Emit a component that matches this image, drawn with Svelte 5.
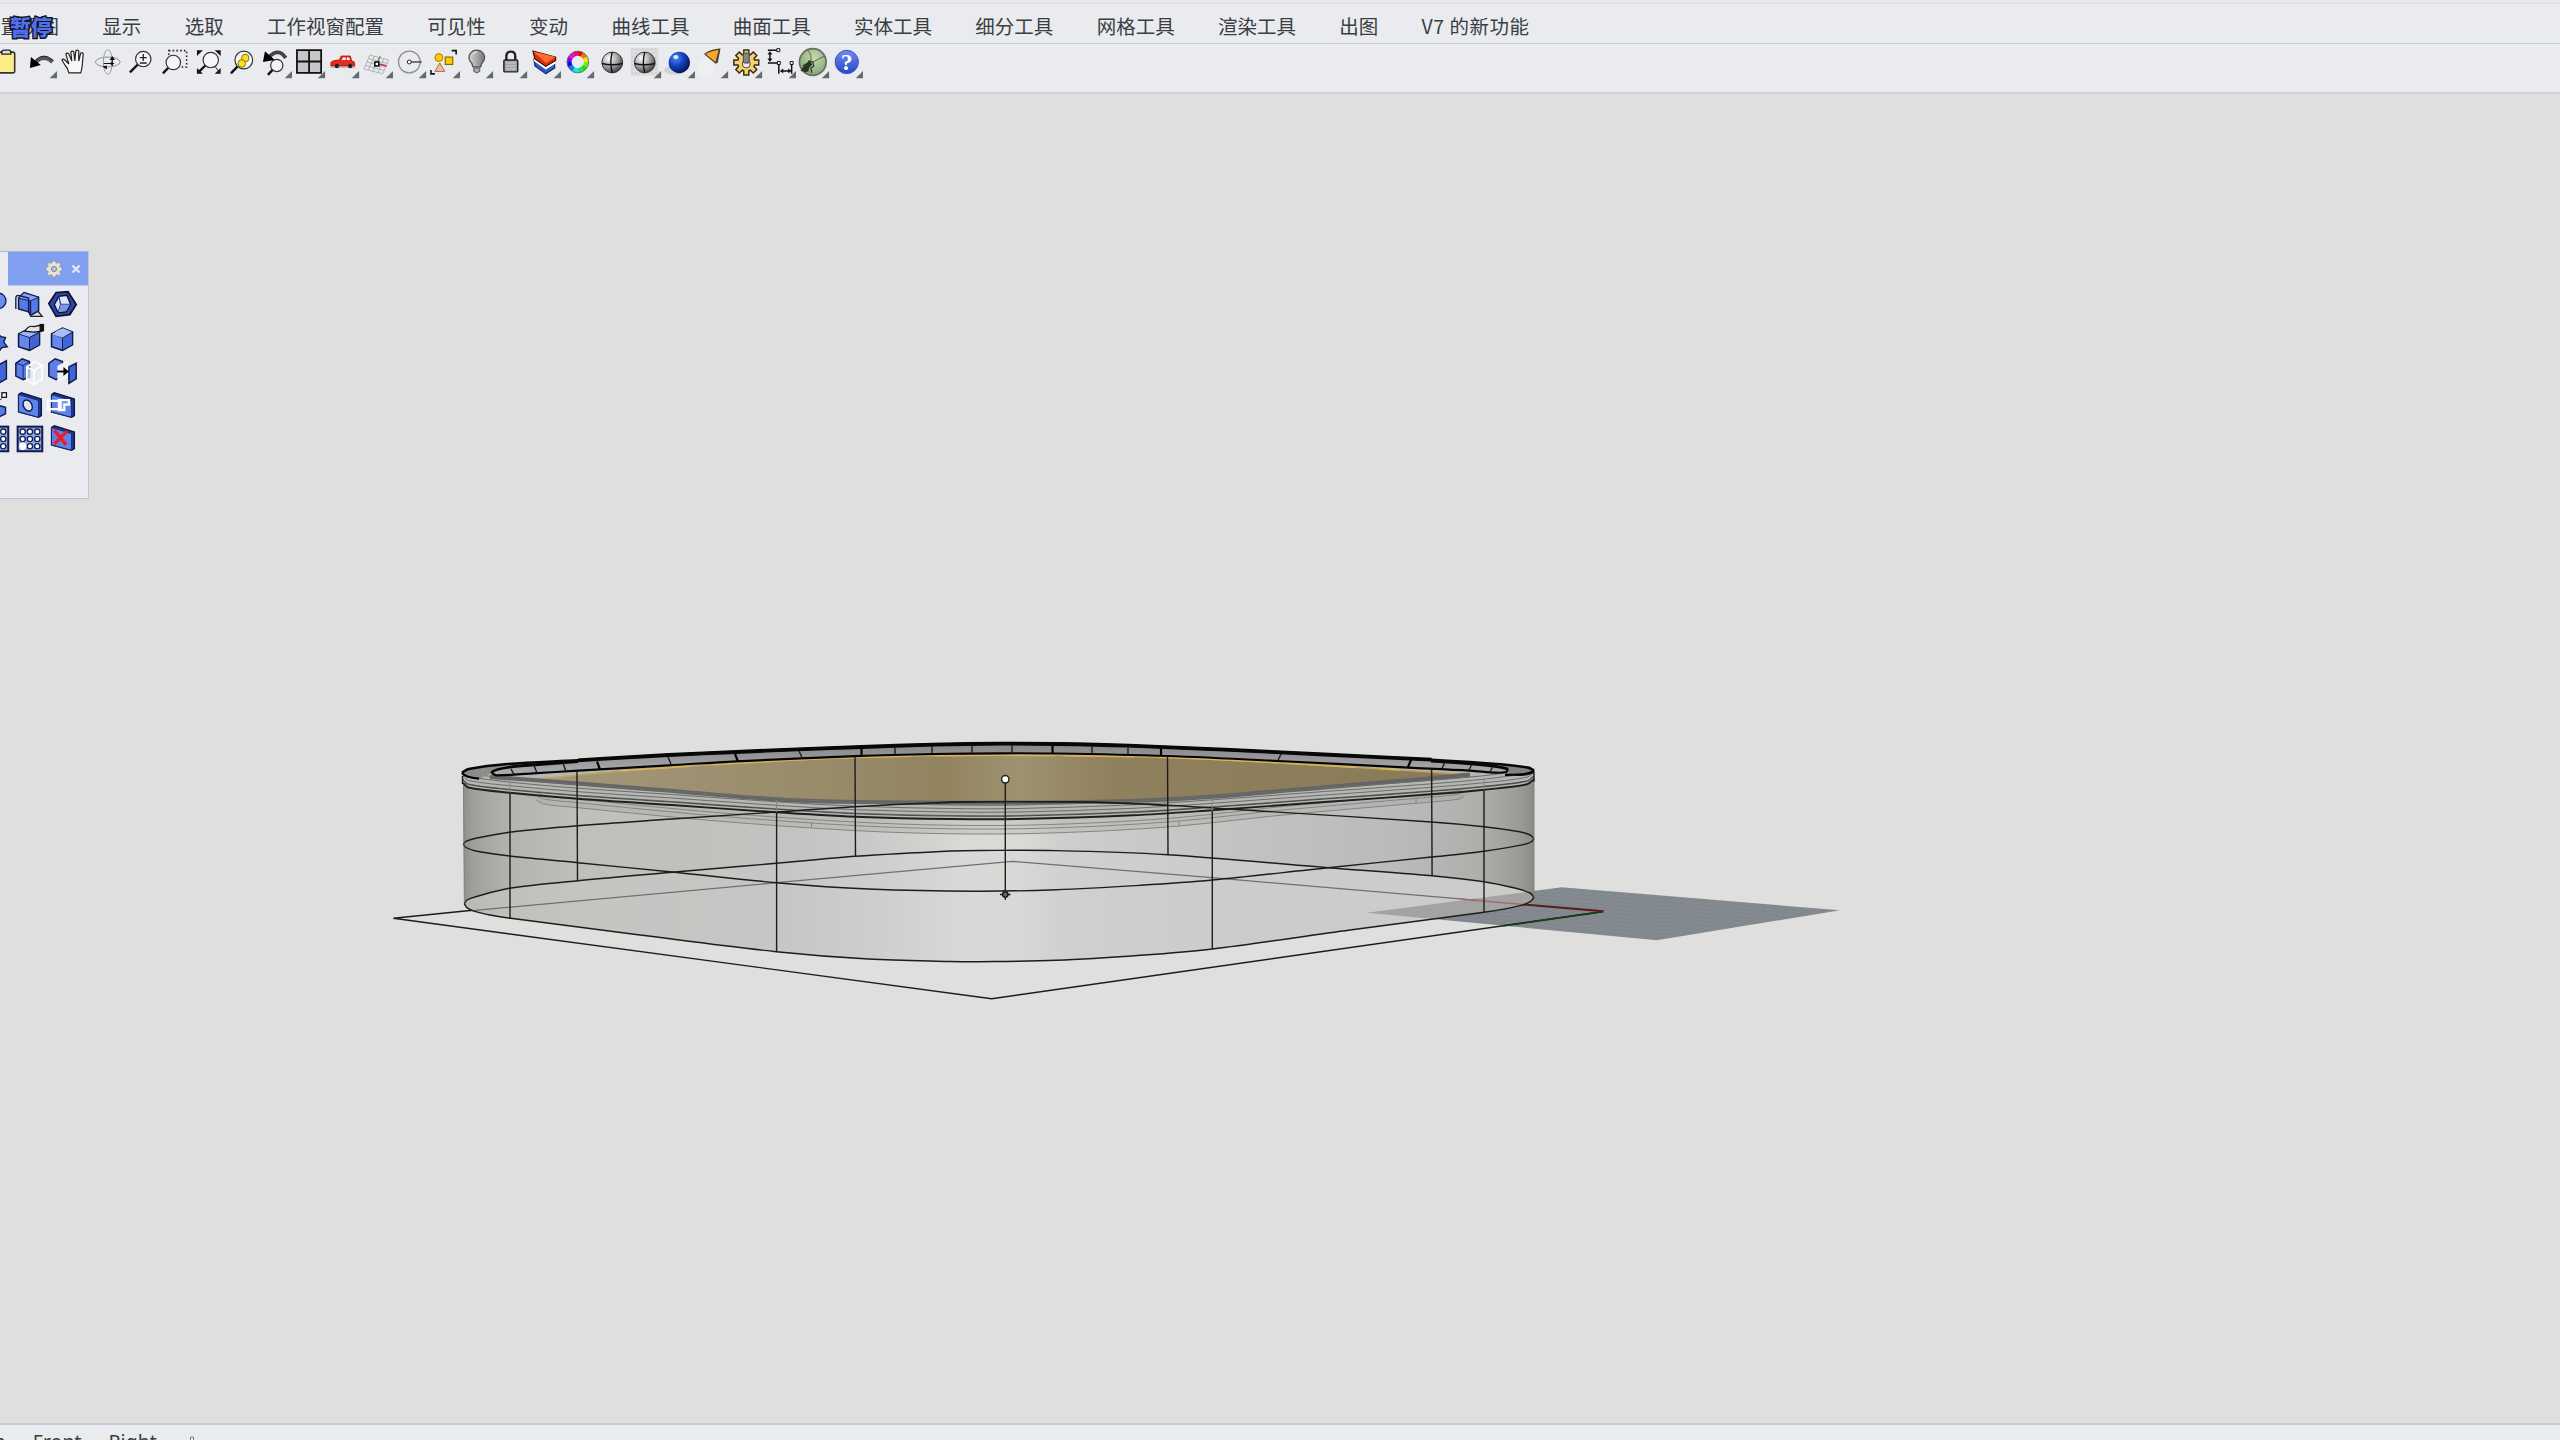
<script>
  const menus = ['设置视图', '显示', '选取', '工作视窗配置', '可见性', '变动', '曲线工具', '曲面工具', '实体工具', '细分工具', '网格工具', '渲染工具', '出图', 'V7 的新功能'];

  const lens = (cx, cy, r, hx, hy) => {
    const a = Math.atan2(hy - cy, hx - cx);
    const sx = cx + r * Math.cos(a), sy = cy + r * Math.sin(a);
    return `<path d="M${sx} ${sy}L${hx} ${hy}" stroke="#111" stroke-width="2.4"/><circle cx="${cx}" cy="${cy}" r="${r}" fill="#f4f5f7" stroke="#333" stroke-width="1.2"/>`;
  };

  const gear = (cx, cy, ro, ri, n) => {
    let d = '';
    for (let i = 0; i < n; i++) {
      const a = (i / n) * Math.PI * 2, s = Math.PI / n;
      [[-0.75, ri], [-0.5, ro], [0.5, ro], [0.75, ri]].forEach(([k, r], j) => {
        const t = a + k * s;
        d += `${i || j ? 'L' : 'M'}${(cx + r * Math.cos(t)).toFixed(1)} ${(cy + r * Math.sin(t)).toFixed(1)}`;
      });
    }
    return d + 'Z';
  };

  // Each tool is drawn in a 34 x 34 box; `more` adds the flyout corner mark.
  const tools = [
    { name: 'paste', art: '<rect x="6" y="7" width="19" height="21" rx="2" fill="#fbee88" stroke="#333" stroke-width="1.6"/><path d="M12 9V7q0-2 2-2h5q2 0 2 2v2z" fill="#ddd" stroke="#222" stroke-width="1.4"/>' },
    { name: 'undo', more: 1, art: '<path d="M12 17Q20 9 29 17" fill="none" stroke="#55595e" stroke-width="4"/><path d="M12 15Q20 7 29 15" fill="none" stroke="#222" stroke-width="1"/><path d="M6 23L7 12L17 20Z" fill="#000"/>' },
    { name: 'pan', art: '<path d="M12 28q-1-5-4-8l-3-5q1-2 3 0l4 4-3-10q1-2 3 0l3 7-1-9q1.500-2 3 0l1 9 1-10q1.500-2 3 0v10l2-8q2-1 2.500 1l-1 12q-.5 4-1.500 7z" fill="#f7f7f7" stroke="#222" stroke-width="1.2"/>' },
    { name: 'rotate', art: '<ellipse cx="17" cy="17" rx="12.500" ry="5" fill="none" stroke="#8e9196"/><ellipse cx="17" cy="17" rx="4.500" ry="12.500" fill="none" stroke="#9a9da2"/><path d="M13 18.500h10M21.500 13v8" stroke="#111" stroke-width="1.200"/><path d="M16 20.500v4l-4.500-3zM18.800 15h5.400l-2.700-4zM20 20v-3l4 1.500z" fill="#111"/>' },
    { name: 'zoom', art: lens(19.500, 14, 7.8, 6, 27.500) + '<path d="M16 12.500h7M19.500 9v7M16 18h7" stroke="#222" stroke-width="1.300"/>' },
    { name: 'zoom-window', art: '<rect x="11" y="5.500" width="18" height="16.500" fill="none" stroke="#222" stroke-width="1.600" stroke-dasharray="1.600 2.200"/>' + lens(15.500, 17.500, 7.3, 5, 28.500) },
    { name: 'zoom-extents', art: '<path d="M5 5h6l-6 6zM29 5h-6l6 6zM5 29h6l-6-6zM29 29h-6l6-6z" fill="#111"/><path d="M23 21l5 7" stroke="#333"/>' + lens(19, 15, 7.8, 7, 27) },
    { name: 'zoom-selected', art: lens(19, 15, 9, 6, 28.500) + '<circle cx="20.500" cy="13" r="3.800" fill="#ffe01b" stroke="#8a7300"/><circle cx="17" cy="18.500" r="3.800" fill="#ffe01b" stroke="#8a7300"/>' },
    { name: 'undo-view', more: 1, art: '<path d="M10 12Q20 2 27 13" fill="none" stroke="#444" stroke-width="3.800"/><path d="M4 17L6 6l10 9z" fill="#000"/>' + lens(18, 20.500, 6.2, 9, 30) },
    { name: 'viewports', more: 1, art: '<rect x="5" y="5" width="24.500" height="23" fill="#c6c7c9" stroke="#111" stroke-width="1.800"/><path d="M17.300 5v23M5 16.500h24.500" stroke="#111" stroke-width="1.800"/>' },
    { name: 'car', more: 1, art: '<path d="M4 22.500h26" stroke="#c2c2c2" stroke-width="1.500"/><path d="M5 21v-3.500q1-2 8.500-2.500l2-4h9l1.500 5q3 0 3 3v2z" fill="#e52c21" stroke="#b8180f"/><path d="M16 15l1-2.500h3V15zM21 12.500h2.500l.7 2.500H21z" fill="#eef"/><circle cx="11" cy="21" r="2.200" fill="#222"/><circle cx="24.500" cy="21" r="2.200" fill="#222"/>' },
    { name: 'cplane', more: 1, art: '<path d="M10 10l19 5-6 14-19-5zM14.500 11l-6 14M19 12.500l-6 14M24 14l-6 14M8.500 13.500l19 5M7 17l19 5M5.500 20.500l19 5" fill="none" stroke="#a9acb0" stroke-width=".9"/><path d="M18 18l2.500-7" stroke="#40a040" stroke-width="1.200"/><path d="M19 19l8 2" stroke="#c33" stroke-width="1.500"/><rect x="15" y="17" width="4" height="4" fill="#fff" stroke="#000" stroke-width="1.500"/>' },
    { name: 'circle-radius', more: 1, art: '<circle cx="16.500" cy="17" r="11" fill="none" stroke="#8d9095" stroke-width="1.300"/><path d="M17 17h12" stroke="#333" stroke-width="1.300"/><circle cx="16.500" cy="17" r="2" fill="#fff" stroke="#222"/>' },
    { name: 'select', more: 1, art: '<path d="M4 25v4h4M25 5.500h4.500v4" fill="none" stroke="#111" stroke-width="1.600"/><circle cx="12" cy="12.500" r="4" fill="#ffc800" stroke="#b37800"/><rect x="18.500" y="12" width="7.500" height="7.500" fill="#ffcc00" stroke="#946400" stroke-width="1.200"/><path d="M13 18l5 8.500H8z" fill="#f2c09a" stroke="#a46a40"/>' },
    { name: 'light', more: 1, art: '<path d="M13 22q0-3-2.500-5.500Q8 13 10 9q2.500-4 7-4t7 4q2 4-.5 7.500Q21 19 21 22z" fill="url(#steel)" stroke="#555" stroke-width="1.300"/><path d="M14 23h6v3.500q-3 3-6 0z" fill="#aaa" stroke="#555"/><path d="M13 9q2-2.500 4-2" stroke="#fff" fill="none"/>' },
    { name: 'lock', more: 1, art: '<path d="M12.500 16v-5q0-4.500 4.500-4.500t4.500 4.500v5" fill="none" stroke="#222" stroke-width="2.400"/><rect x="10" y="15" width="14" height="12" rx="1" fill="#a2a3a5" stroke="#222" stroke-width="1.500"/><path d="M12 18h10M12 21h10M12 24h10" stroke="#d3d3d3"/>' },
    { name: 'layers', more: 1, art: '<path d="M6 14l1 7 11 8 9-6v-8l-9 6z" fill="#315ac4" stroke="#142a6b" stroke-width="1.200"/><path d="M6 12v4l12 8.500 10-6V13l-10 8z" fill="#fff"/><path d="M5 6l23 6v3.500l-10 6L7 14z" fill="#d92f10" stroke="#300" stroke-width="1.100"/><path d="M5 6l23 6-10 6z" fill="#ff6a2d"/>' },
    { name: 'colors', more: 1, art: [0, 1, 2, 3, 4, 5, 6, 7, 8, 9, 10, 11].map(i => `<circle cx="17" cy="17" r="8.500" fill="none" stroke="hsl(${i * 30} 90% 48%)" stroke-width="4.600" stroke-dasharray="4.600 100" transform="rotate(${i * 30 - 90} 17 17)"/>`).join('') + '<circle cx="17" cy="17" r="11" fill="none" stroke="#555" stroke-width=".8"/>' },
    { name: 'shaded', art: '<circle cx="17.500" cy="17.500" r="10.500" fill="url(#ball)" stroke="#333"/><path d="M17.500 7q-3 10 0 21M7 18.500q10 2.500 21 0" fill="none" stroke="#111" stroke-width="1.400"/>' },
    { name: 'shaded-selected', more: 1, art: '<rect x="3" y="3" width="28" height="28" fill="#dcdddf"/><path d="M3 4h28M3 8h28M3 12h28M3 16h28M3 20h28M3 24h28M3 28h28" stroke="#c3c4c7" stroke-dasharray="2 2"/><circle cx="17" cy="17.500" r="10.500" fill="url(#ball)" stroke="#333"/><path d="M17 7q-3 10 0 21M6.500 18.500q10 2.500 21 0" fill="none" stroke="#111" stroke-width="1.400"/>' },
    { name: 'render', more: 1, art: '<ellipse cx="13" cy="25" rx="11" ry="5" fill="#d2d3d6"/><circle cx="17.500" cy="17.500" r="10.800" fill="url(#blueball)"/><ellipse cx="14" cy="12" rx="2.600" ry="2" fill="#fff" opacity=".85"/>' },
    { name: 'spotlight', more: 1, art: '<circle cx="11" cy="23" r="9" fill="#f1f1f1" opacity=".6"/><path d="M10 9q5-4 15-5l-4 14z" fill="#f5a92f" stroke="#4b3714" stroke-width="1.200"/><path d="M21 18l3.500-14 1 1-2.500 13z" fill="#444"/>' },
    { name: 'options', more: 1, art: `<path d="${gear(17.500, 17.500, 12.800, 8.8, 8)}" fill="#f3d07a" stroke="#3f2d07" stroke-width="1.500"/><circle cx="17.500" cy="19" r="4" fill="#e9ebef" stroke="#5c440e"/><rect x="14.500" y="8" width="6" height="10" rx="1" fill="#858585" stroke="#444"/>` },
    { name: 'dimension', more: 1, art: '<path d="M5 5h11M5 18h11v11M29 18v11" fill="none" stroke="#111" stroke-width="1.500"/><path d="M7 8v7M19 26h8" stroke="#111" stroke-width="1.500"/><path d="M7 6l2.500 3.500h-5zM7 17l2.500-3.500h-5zM17 26l3.500-2.500v5zM29 26l-3.500-2.500v5z" fill="#111"/><path d="M14 3.500h3v3h-3zM14.500 16.500h3v3h-3zM27.500 16.500h3v3h-3z" fill="#fff" stroke="#111"/>' },
    { name: 'grasshopper', more: 1, art: '<circle cx="17" cy="17" r="13.500" fill="url(#leaf)" stroke="#666f60" stroke-width="1.700"/><path d="M15 17Q16 9 12 5M17 17L29 11" fill="none" stroke="#5b6a4c" stroke-width="1"/><path d="M7 21l5-3 1-2 4 1 1 4-3 2 1 5M9 24l-4 2" fill="none" stroke="#29331f" stroke-width="1.200"/><path d="M5.500 24l4-5 5-2.500 2 3-3 3-1 4-4 1z" fill="#29331f"/>' },
    { name: 'help', more: 1, art: '<circle cx="17" cy="17" r="11.800" fill="url(#helpblue)" stroke="#3a55bc"/><text x="17" y="25" text-anchor="middle" font-family="Liberation Serif, serif" font-weight="bold" font-size="24" fill="#fff">?</text>' }
  ];

  const box = '<path d="M5 12l12-6.500 11 4.500v14l-11 6-12-4z" fill="#6688ee" stroke="#101a44" stroke-width="1.700"/><path d="M5 12l12-6.500 11 4.500-11 6z" fill="#9fb5f8" stroke="#14204f"/><path d="M17 16l11-6v14l-11 6z" fill="#4264d2" stroke="#101a44"/>';
  const slab = '<path d="M5 5l3-2 22 7v18l-3 2L5 24z" fill="#22399b" stroke="#0d1740" stroke-width="1.500"/><path d="M5 5l22 6.500V30L5 24z" fill="#5c82ee" stroke="#14225c"/>';
  const dots = (n) => {
    let s = '<rect x="4" y="4" width="27" height="27" fill="#8fa8f5" stroke="#111a48" stroke-width="2.200"/>';
    for (let r = 0; r < 3; r++) for (let c = 0; c < 3; c++) s += `<circle cx="${9.500 + c * 8}" cy="${9.500 + r * 8}" r="2.900" fill="#fff" stroke="#16204f" stroke-width="1.500"/>`;
    return s + (n ? '<circle cx="9.500" cy="25.500" r="4" fill="#fff"/>' : '');
  };
  const solids = [
    '<circle cx="20" cy="13" r="8.500" fill="#6c8df0" stroke="#14225c" stroke-width="1.500"/>',
    '<path d="M18 30h13l-6-7" fill="#ddd" stroke="#222" stroke-width="1.400"/><path d="M5 10l6-6 16 5v15l-9 5-2-4-11-3z" fill="#5579e8" stroke="#101a44" stroke-width="1.600"/><path d="M5 10l13 3 9-4-16-5z" fill="#89a3f5" stroke="#101a44"/><path d="M18 13v15" stroke="#101a44" stroke-width="1.600"/><path d="M2 22V10q0-3 3-3l11 3v16" fill="none" stroke="#101a44" stroke-width="1.500"/>',
    '<path d="M10 4l13-1 9 14-7 11-15 2-8-14z" fill="#2f49a5" stroke="#0c1338" stroke-width="2"/><path d="M13 8l9-1 4 10-5 8-9 1-4-9z" fill="#dfe5f8" stroke="#0c1338" stroke-width="1.600"/><path d="M13 8l2 9-3 9M15 17h11" fill="none" stroke="#273d91" stroke-width="1.400"/><path d="M15 17h10l-4 7-8 1z" fill="#7d97e6"/>',
    '<path d="M8 15h9l2-4 4 4 5 1-2 5 4 5-6 1-3 4-4-4H8z" fill="#4d71df" stroke="#101a44" stroke-width="1.500"/>',
    box + '<path d="M12 9q4-7 10-5l9-2v7l-10 1z" fill="#e6e6e6" stroke="#111" stroke-width="1.300"/><rect x="28" y="1" width="5" height="8" fill="#111"/>',
    box + '<path d="M6 13q5-6 12-7l9 4-10 6z" fill="#a9bcf9"/>',
    '<path d="M20 10l9-5v20l-9 5z" fill="#4065d8" stroke="#101a44" stroke-width="1.500"/><path d="M5 17h11" stroke="#111" stroke-width="2"/>',
    '<path d="M2 8l7-5 8 3v17l-7 3-8-4z" fill="#5a7eea" stroke="#101a44" stroke-width="1.600"/><path d="M2 8l8 2.500 7-4.500M10 10.500V26" fill="none" stroke="#14225c"/><path d="M14 12l9-6 8 4v15l-9 6-8-4zM14 12l8 4 9-6M22 16v15" fill="#e9ebef" fill-opacity=".72" stroke="#fff" stroke-width="1.700"/>',
    '<path d="M2 8l7-5 8 3v16l-7 4-8-4z" fill="#5a7eea" stroke="#101a44" stroke-width="1.600"/><path d="M12 11l10-5v17l-10 4z" fill="#eff1f6" stroke="#fff"/><path d="M24 12l8-4v17l-8 5z" fill="#4065d8" stroke="#101a44" stroke-width="1.600"/><path d="M11 17h9" stroke="#000" stroke-width="2"/><path d="M18 12l6 5-6 5z" fill="#000"/>',
    '<path d="M6 21l12-5 10 3v7l-10 5-12-4z" fill="#567ae7" stroke="#101a44" stroke-width="1.500"/><path d="M17 16l7-7" stroke="#111"/><rect x="24" y="3" width="5" height="5" fill="#fff" stroke="#111" stroke-width="1.400"/>',
    slab + '<ellipse cx="15" cy="17" rx="4.500" ry="6.500" fill="#dfe4f2" stroke="#101a44" stroke-width="1.500" transform="rotate(-30 15 17)"/>',
    slab + '<path d="M13 11h11v5h-5v6h-6z" fill="#7d9af2" stroke="#fff" stroke-width="2.400"/><path d="M1 12h14v9H1z" fill="none" stroke="#fff" stroke-width="2.400"/>',
    dots(false), dots(true),
    slab + '<path d="M8 8l13 16M22 9L8 23" stroke="#ee1c24" stroke-width="3.600"/>'
  ];

  // Catmull-Rom spline through the points, written as cubic segments.
  const curve = (p, start = 'M') => {
    let d = `${start}${p[0][0]} ${p[0][1]}`;
    for (let i = 0; i < p.length - 1; i++) {
      const a = p[i - 1] ?? p[i], b = p[i], c = p[i + 1], e = p[i + 2] ?? c;
      const l = Math.hypot(c[0] - b[0], c[1] - b[1]);
      const t1 = l / (Math.hypot(c[0] - a[0], c[1] - a[1]) || 1) / 3;
      const t2 = l / (Math.hypot(e[0] - b[0], e[1] - b[1]) || 1) / 3;
      const f = [b[0] + (c[0] - a[0]) * t1, b[1] + (c[1] - a[1]) * t1, c[0] - (e[0] - b[0]) * t2, c[1] - (e[1] - b[1]) * t2, c[0], c[1]];
      d += 'C' + f.map(v => v.toFixed(1)).join(' ');
    }
    return d;
  };
  const shift = (p, dy) => p.map(([x, y]) => [x, y + dy]);
  const rev = (p) => [...p].reverse();

  const baseFront = [[464.3, 903.7], [467, 907.8], [475.7, 911.7], [490, 915], [510.7, 918.3], [640, 935], [776.4, 951.7], [868.6, 959], [950, 961.5], [980, 961.7], [1056.5, 960.3], [1140.7, 955.3], [1212.3, 949], [1350, 930], [1484, 912.3], [1508, 908.4], [1523.4, 904.7], [1531, 901], [1534, 897.3]];
  const baseBack = [[464.3, 903.7], [467, 900], [475.7, 896.7], [509.6, 888.3], [578, 880.7], [672, 872.3], [776.4, 863.3], [855.4, 856.3], [950.7, 851], [980, 850.5], [1056.5, 850.6], [1167.5, 854.7], [1328, 867.7], [1431.6, 875.7], [1484, 881.7], [1515.8, 888.3], [1530, 893], [1534, 897.3]];
  const midFront = [[463.2, 844.3], [466, 847.5], [475.7, 851], [509.6, 856], [578, 862.7], [672, 872], [776.4, 882.7], [868.6, 889], [975.7, 891.2], [1056.5, 889.7], [1140.7, 885.3], [1212.3, 880], [1328, 867.7], [1431.6, 857], [1484, 851.3], [1523.4, 844.6], [1531, 842], [1534, 838.7]];
  const midBack = [[463.2, 844.3], [466, 841.3], [475.7, 838.3], [509.6, 832.3], [578, 825.7], [672, 819], [776.4, 812], [855.4, 806.7], [936, 802.7], [980, 801.7], [1094.8, 802.3], [1167.5, 805.3], [1232.6, 809.3], [1431.6, 822], [1484, 826.7], [1519.6, 831.7], [1530, 835], [1534, 838.7]];
  const lip = [[463, 783], [468.6, 787.5], [509.6, 792.7], [578, 798.7], [672, 805], [772, 812], [855.4, 816.7], [950.7, 819], [1018, 819], [1133, 815.3], [1212.3, 810.3], [1324.4, 802], [1431.6, 794.3], [1484, 789.7], [1527, 784.2], [1534, 779]];
  const rimTop = [[462, 772.7], [468.6, 769], [507.9, 764], [578, 760.3], [668.6, 755], [736, 752], [797, 749.4], [861.4, 747], [932.9, 744.6], [1000, 743.7], [1056.5, 744], [1129, 745.7], [1225, 749.7], [1324.4, 754.5], [1431.6, 759.7], [1500.5, 764.3], [1528, 767.6], [1534, 770.3]];
  const tubeLow = [[491.5, 773], [497, 775.4], [533, 773.3], [578, 770.7], [668.6, 765.3], [736.4, 761.3], [855.4, 756.2], [932.9, 754], [1000, 753.3], [1056.5, 753.5], [1167.5, 756], [1278.5, 761], [1408.6, 767.6], [1470, 770.6], [1496.6, 772.7], [1506, 772], [1508, 769.3]];
  const wellFront = [[490, 777], [533, 780], [660, 790], [776.4, 799.3], [855.4, 802], [1000, 802.7], [1133, 801], [1212.3, 796.7], [1324.4, 787.3], [1431.6, 778.3], [1470, 774.6]];
  const tanTop = [[536, 779.5], [620, 771], [736, 763.3], [855, 757.5], [1000, 755.3], [1167, 757.5], [1300, 764], [1400, 770], [1464, 774.3]];
  const ghost = [[536.4, 800], [543.6, 804], [578, 807.7], [690, 818.7], [811.4, 828], [904, 832.7], [1000, 834], [1095, 831.3], [1179, 826], [1286, 814.7], [1416, 803.3], [1458, 799.3], [1464, 796.5]];

  const bodyPath = curve(lip) + curve(rev(baseFront), 'L') + 'Z';
  const floorPath = curve(baseBack) + curve(rev(baseFront), 'L') + 'Z';
  const rimPath = curve(rimTop) + curve(rev(lip), 'L') + 'Z';
  const tubePath = curve(rimTop.slice(2, -2)) + curve(rev(tubeLow), 'L') + 'Z';
  const tanPath = curve(tanTop) + curve(rev(wellFront.slice(1)), 'L') + 'Z';

  const seams = [[511, 769, 774.5], [534, 765.500, 773], [563, 763, 771.5], [668, 757, 764], [799, 751, 757.5], [895, 747, 754.5], [932, 746, 753.5], [972, 745, 753], [1012, 745, 753], [1092, 746, 754], [1128, 747, 754.5], [1281, 754, 760.5], [1445, 762, 768.500], [1472, 764, 770], [1493, 766, 772]];
  const heavySeams = [[597, 761.5, 769.5], [735, 754, 761.5], [861.5, 748.5, 755.500], [1052.500, 745.5, 753], [1161, 748, 755], [1411, 760, 767]];
  const uprights = [[577, 771, 880.7], [855, 756.5, 856.3], [1167.5, 756, 854.7], [1431.6, 768.5, 875.7]];
  const frontUprights = [[510, 792.7, 918, 781], [776.6, 812, 951.7, 800], [1212.3, 811, 949, 798], [1484, 790, 912.3, 779]];
</script>

<svg class="defs" width="0" height="0" aria-hidden="true">
  <defs>
    <linearGradient id="steel"><stop offset="0" stop-color="#d6d7d8" /><stop offset="1" stop-color="#777" /></linearGradient>
    <radialGradient id="ball" cx=".35" cy=".3" r=".75"><stop offset="0" stop-color="#fff" /><stop offset=".5" stop-color="#aaa" /><stop offset="1" stop-color="#3a3a3a" /></radialGradient>
    <radialGradient id="blueball" cx=".35" cy=".3" r=".75"><stop offset="0" stop-color="#4a8bf5" /><stop offset=".45" stop-color="#1546c4" /><stop offset="1" stop-color="#041052" /></radialGradient>
    <radialGradient id="leaf" cx=".55" cy=".35" r=".7"><stop offset="0" stop-color="#c6dcae" /><stop offset="1" stop-color="#82a070" /></radialGradient>
    <linearGradient id="helpblue" x2="0" y2="1"><stop offset="0" stop-color="#6e8cf2" /><stop offset="1" stop-color="#2646c8" /></linearGradient>
  </defs>
</svg>

<div class="app">
  <nav class="menu">
    {#each menus as m}<span>{m}</span>{/each}
    <b class="pause">暂停</b>
  </nav>
  <div class="toolbar">
    {#each tools as t (t.name)}
      <svg class="tool" viewBox="0 0 34 34">
        <g fill="none">{@html t.art}</g>
        {#if t.more}<path d="M33.500 26v7.500h-7.500z" fill="#666a70" />{/if}
      </svg>
    {/each}
  </div>

  <main class="viewport">
    <svg class="scene" viewBox="0 94 2560 1328">
      <defs>
        <linearGradient id="wall" gradientUnits="userSpaceOnUse" x1="463" x2="1534" y1="0" y2="0">
          <stop offset="0" stop-color="#8e8e8b" /><stop offset=".01" stop-color="#a0a09c" /><stop offset=".045" stop-color="#b3b3af" />
          <stop offset=".11" stop-color="#bfbfbb" /><stop offset=".29" stop-color="#c2c2c0" /><stop offset=".38" stop-color="#c9c9c7" />
          <stop offset=".44" stop-color="#d3d3d1" /><stop offset=".47" stop-color="#dadad8" /><stop offset=".52" stop-color="#dadad8" />
          <stop offset=".56" stop-color="#cececc" /><stop offset=".7" stop-color="#c4c4c2" /><stop offset=".88" stop-color="#bababa" />
          <stop offset=".95" stop-color="#aeaeab" /><stop offset=".985" stop-color="#9c9c98" /><stop offset="1" stop-color="#8a8a86" />
        </linearGradient>
        <linearGradient id="tan" gradientUnits="userSpaceOnUse" x1="536" x2="1464" y1="0" y2="0">
          <stop offset="0" stop-color="#a4987a" /><stop offset=".34" stop-color="#978a68" /><stop offset=".44" stop-color="#92845f" />
          <stop offset=".52" stop-color="#9f9270" /><stop offset=".62" stop-color="#8f815e" /><stop offset="1" stop-color="#897b57" />
        </linearGradient>
        <linearGradient id="floor" gradientUnits="userSpaceOnUse" x1="463" x2="1534" y1="0" y2="0">
          <stop offset="0" stop-color="#c5c5c3" stop-opacity=".7" /><stop offset=".3" stop-color="#c7c7c5" stop-opacity=".8" />
          <stop offset=".42" stop-color="#d8d8d6" stop-opacity=".3" /><stop offset=".56" stop-color="#d4d4d2" stop-opacity=".4" />
          <stop offset=".7" stop-color="#cdcdcb" stop-opacity=".9" /><stop offset="1" stop-color="#cecdcc" stop-opacity=".95" />
        </linearGradient>
        <linearGradient id="tube" x2="0" y2="1"><stop offset="0" stop-color="#858588" /><stop offset="1" stop-color="#aeaeb2" /></linearGradient>
        <pattern id="grid" width="10" height="4" patternUnits="userSpaceOnUse" patternTransform="skewY(5)">
          <rect width="10" height="4" fill="#858b90" /><path d="M0 .5h10M0 4L10 0" stroke="#7b838a" stroke-width=".6" />
        </pattern>
      </defs>

      <path d="M1366.700 912.700L1561.700 887.300L1840 910.300L1656.700 940.300Z" fill="url(#grid)" />
      <path class="line" d="M480 909.500L393.400 918.300L991.600 998.700L1603.300 911.500" />
      <path d="M1503 925.800L1603.300 911.600" stroke="#123f18" stroke-width="1.700" />
      <path d="M1500 902.500L1603.300 911.300" stroke="#5c1a1a" stroke-width="1.900" />

      <path d={bodyPath} fill="url(#wall)" />
      <path d={floorPath} fill="url(#floor)" />
      <clipPath id="inside"><path d={floorPath} /></clipPath>
      <g clip-path="url(#inside)">
        <path d="M1366.700 912.700L1561.700 887.300L1840 910.300L1656.700 940.300Z" fill="#a3a3a4" />
        <path d="M475 910.300L776.400 882.700L1012.500 861.300L1212 877.700L1477.500 900.300" fill="none" stroke="#70706e" stroke-width="1.300" />
        <path d="M1460 899L1540 906" stroke="#a56a6a" stroke-width="1.300" />
      </g>

      <path d={rimPath} fill="#b6b6b3" />
      <path d={curve(ghost) + curve(rev(lip.slice(2, -2)), 'L') + 'Z'} fill="#999995" opacity=".24" />
      {#each [0, -5, -8.500] as dy}<path d={curve(shift(ghost, dy))} class="ghost" />{/each}
      <path d="M811.500 822v5M1179 821v5M1416 798v5" class="ghost" />

      <path d={tanPath} fill="url(#tan)" />
      <path d={curve(tanTop)} class="gold" />
      <path d={curve(tanTop.slice(1, -1))} class="gold bright" />
      <path d={curve(wellFront)} class="well" />
      <path d={curve(midBack.slice(8, 12))} class="line" />

      {#each [-14, -10.500, -7, -3.500] as dy}<path d={curve(shift(lip.slice(dy < -8 ? 1 : 0, dy < -8 ? -1 : undefined), dy))} class="lipline" />{/each}
      <path d={curve(lip)} class="line lip" />
      <path d={curve(shift(lip, -3))} class="line faint" />
      <path d="M462.500 774Q464 777 479 778.700M462.500 776v8M1534 772Q1530 775.500 1515 775.300M1534 772v10" class="line" />

      <path d={curve(rimTop.slice(0, 4)) + curve(rev(tubeLow.slice(0, 4)), 'L') + 'L479 778.700Q464 777 462 772.700Z'} fill="#8c8c8b" />
      <path d="M1470 762L1500.500 764.300L1528 767.600Q1536 770.500 1530 773Q1522 776 1505 774.500L1508 769.300Z" fill="#828282" />
      <path d="M462 772.700Q464 777 479 778.700M1534 770.300Q1532 775 1505 774.800" class="line heavyline" />
      <path d={tubePath} fill="url(#tube)" />
      <path d={curve(tubeLow)} class="line ring" />
      <path d="M491.500 773Q493 768 525 765.500L578 761.500" class="line ring thick" />
      <path d="M1508 769.300Q1500 765 1431 761" class="line ring thick" />
      <path d={curve(rimTop)} class="rim" />
      <path d={curve(rimTop.slice(3, -3))} class="rim heavy" />
      {#each seams as [x, a, b]}<path d="M{x} {a}L{x + (x < 850 ? 3 : x > 1250 ? -3 : 0)} {b}" class="line" />{/each}
      {#each heavySeams as [x, a, b]}<path d="M{x} {a}L{x + (x < 850 ? 3 : x > 1250 ? -3 : 0)} {b}" class="line heavyline" />{/each}

      {#each [baseFront, baseBack, midFront, midBack] as c}<path d={curve(c)} class="line" />{/each}
      {#each uprights as [x, a, b]}<path d="M{x} {a}L{x + .5} {b}" class="line" />{/each}
      {#each frontUprights as [x, a, b, top]}
        <path d="M{x} {top}V{a}" class="ghost" />
        <path d="M{x} {a}V{b}" class="line" />
      {/each}
      <path d="M463.500 785L464.300 903M1534 781V897" stroke="#777" stroke-width=".8" />

      <path d="M1005.300 779V894" class="line" />
      <circle cx="1005.300" cy="779.300" r="3.700" fill="#fff" stroke="#222" stroke-width="1.500" />
      <path d="M1000 894.500h10.600M1005.300 889v11" stroke="#222" stroke-width="1.300" />
      <circle cx="1005.300" cy="894.500" r="2.700" fill="#666" stroke="#1c1c1c" stroke-width="1.500" />
    </svg>

    <aside class="panel">
      <header>
        <svg width="18" height="18" viewBox="0 0 18 18"><path d={gear(9, 9, 8.2, 6.4, 8)} fill="#e4e4dc" stroke="#98937c" stroke-width=".7" /><circle cx="9" cy="9" r="2.600" fill="#b9c3e0" stroke="#8a876f" /></svg>
        <svg width="10" height="10" viewBox="0 0 10 10"><path d="M1.500 1.500l7 7M8.500 1.500l-7 7" stroke="#e4e9fa" stroke-width="2.200" /></svg>
      </header>
      <div class="solids">
        {#each solids as s}<svg viewBox="0 0 34 34">{@html s}</svg>{/each}
      </div>
    </aside>
  </main>

  <footer class="tabs">
    <span>Perspective</span><span>Top</span><span>Front</span><span>Right</span>
    <svg width="14" height="14" viewBox="0 0 14 14"><path d="M5.500 1h3v4.500H13v3H8.500V13h-3V8.500H1v-3h4.500z" fill="#f6f6f6" stroke="#777" /></svg>
  </footer>
</div>

<style>
  :global(body) { margin: 0; overflow: hidden; }
  .defs { position: absolute; }
  .app {
    width: 2560px; height: 1440px; overflow: hidden; display: flex; flex-direction: column;
    background: #e9ebef; color: #3a3d42;
    font-family: "Noto Sans", "Noto Sans CJK SC", sans-serif;
  }
  .menu {
    position: relative; box-sizing: border-box; height: 44px; flex: none; display: flex; align-items: center; gap: 43.3px;
    margin-left: -20px; padding: 8px 0 0 1px; border-bottom: 1px solid #c9cfdc;
    font: 19.5px/26px "Noto Sans CJK SC", sans-serif; white-space: nowrap;
    background: linear-gradient(#e9eaec 2px, #dfe1e5 2px, #dfe1e5 4px, #e9ebef 4px);
  }
  .menu span:last-of-type { letter-spacing: .5px; }
  .pause {
    position: absolute; left: 30px; top: 13px; font-size: 21px; line-height: 26px; font-weight: 900;
    color: #5270ee; -webkit-text-stroke: 3px #15171f; paint-order: stroke fill;
  }
  .toolbar { box-sizing: border-box; height: 50px; flex: none; display: flex; padding-top: 1px; margin-left: -10px; border-bottom: 2px solid #cdd0da; }
  .tool { width: 33.6px; height: 34px; flex: none; }
  .viewport { position: relative; flex: none; height: 1329px; background: #dfdfdd; }
  .scene { display: block; width: 2560px; height: 1328px; fill: none; }
  .line { fill: none; stroke: #1c1c1b; stroke-width: 1.4; }
  .faint { stroke: #4a4a4a; stroke-width: 1.1; }
  .lip { stroke: #1f1f1e; stroke-width: 1.900; }
  .ring { stroke: #060606; stroke-width: 2.200; }
  .thick { stroke-width: 2.800; }
  .heavyline { stroke: #000; stroke-width: 2.200; }
  .rim { fill: none; stroke: #070707; stroke-width: 2.600; }
  .rim.heavy { stroke-width: 3.800; }
  .lipline { fill: none; stroke: #6c6c6a; stroke-width: 1; }
  .ghost { fill: none; stroke: #858582; stroke-width: 1; }
  .gold { fill: none; stroke: #c0a45e; stroke-width: 1.600; }
  .gold.bright { stroke: #d9b256; stroke-dasharray: 70 24 120 8; }
  .well { fill: none; stroke: #656567; stroke-width: 4.200; }
  .panel {
    position: absolute; left: -22px; top: 157px; width: 109px; height: 246px;
    background: #e9ebef; border: 1px solid #bfc5d6; border-top-color: #a9b7e6;
  }
  .panel header {
    height: 33px; margin-left: 29px; padding-right: 7px; display: flex; align-items: center; justify-content: flex-end; gap: 8px;
    background: #819ff0; border-bottom: 1px solid #c3cbe2;
  }
  .solids { display: grid; grid-template-columns: repeat(3, 33.500px); grid-auto-rows: 33.500px; padding-top: 2px; fill: none; }
  .solids svg { width: 31px; height: 31px; margin: 1px; }
  .tabs {
    height: 40px; flex: none; display: flex; align-items: flex-start; gap: 27px; margin-left: -160px; padding-top: 1px;
    border-top: 2px solid #c6cce0; font-size: 19.500px; line-height: 31px;
  }
  .tabs svg { margin-top: 10px; margin-left: 1px; }
</style>
